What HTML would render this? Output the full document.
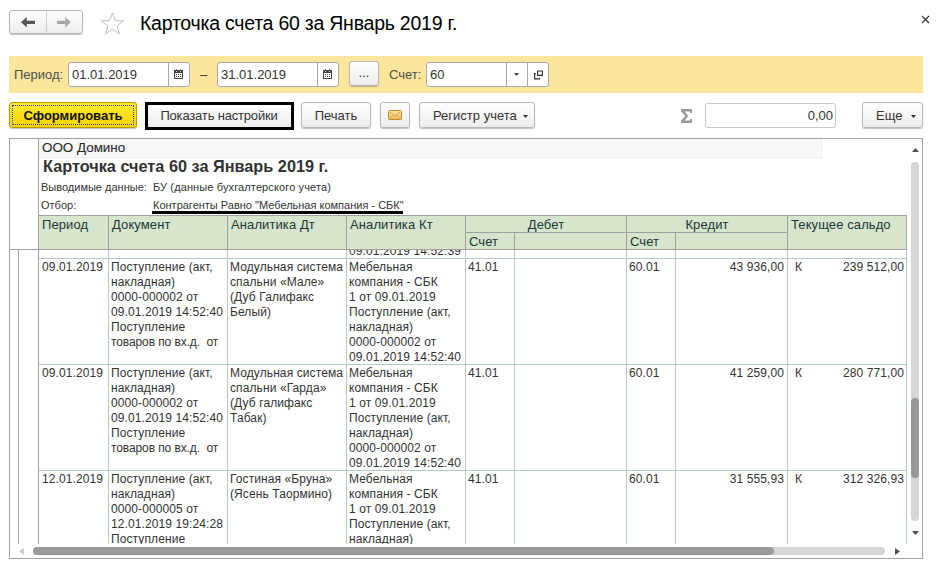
<!DOCTYPE html>
<html><head><meta charset="utf-8">
<style>
*{box-sizing:border-box;margin:0;padding:0}
html,body{width:940px;height:563px;overflow:hidden;background:#fff;font-family:"Liberation Sans",sans-serif;color:#333}
.a{position:absolute}
.t{position:absolute;white-space:nowrap}
.btn{position:absolute;border:1px solid #b9b9b9;border-radius:3px;background:linear-gradient(#ffffff,#ededed);box-shadow:0 1px 1px rgba(0,0,0,.25);font-size:13px;color:#333;text-align:center}
.inp{position:absolute;border:1px solid #a9a9a9;border-radius:3px;background:#fff;font-size:13px;color:#333}
.vl{position:absolute;width:1px;background:#b1cdc5}
.hl{position:absolute;height:1px;background:#b1cdc5}
.gv{position:absolute;width:1px;background:#a0a0a0}
.gh{position:absolute;height:1px;background:#a0a0a0}
.d{position:absolute;font-size:12px;line-height:15px;color:#333;white-space:nowrap;letter-spacing:0.1px}
.h{position:absolute;font-size:13px;line-height:15px;color:#1a3838;white-space:nowrap;letter-spacing:0.1px}
</style></head><body>

<!-- nav buttons -->
<div class="btn" style="left:9px;top:10px;width:74px;height:24px"></div>
<div class="a" style="left:46px;top:11px;width:1px;height:22px;background:#d0d0d0"></div>
<svg class="a" style="left:20px;top:17px" width="16" height="12" viewBox="0 0 16 12"><path d="M1 5.3 L6.8 0 V3.8 H15 V6.9 H6.8 V10.6 Z" fill="#555"/></svg>
<svg class="a" style="left:56px;top:17px" width="16" height="12" viewBox="0 0 16 12"><path d="M15 5.3 L9.2 0 V3.8 H1 V6.9 H9.2 V10.6 Z" fill="#a8a8a8"/></svg>
<!-- star -->
<svg class="a" style="left:100px;top:12px" width="25" height="23" viewBox="0 0 25 23"><path d="M12.5 1 L15.4 8.6 L23.5 8.9 L17.1 13.9 L19.4 21.8 L12.5 17.3 L5.6 21.8 L7.9 13.9 L1.5 8.9 L9.6 8.6 Z" fill="none" stroke="#b8c0c8" stroke-width="1"/></svg>
<div class="t" style="left:140px;top:11px;font-size:19.5px;line-height:24px;color:#000;letter-spacing:-0.24px">Карточка счета 60 за Январь 2019 г.</div>
<svg class="a" style="left:921px;top:15px" width="9" height="9" viewBox="0 0 9 9"><path d="M1 1 L8 8 M8 1 L1 8" stroke="#3a3a3a" stroke-width="1.3"/></svg>

<!-- yellow bar -->
<div class="a" style="left:9px;top:56px;width:914px;height:37px;background:#fbe79b"></div>
<div class="t" style="left:14px;top:67px;font-size:13px;line-height:15px;color:#4d4d4d">Период:</div>
<div class="inp" style="left:68px;top:62px;width:122px;height:25px"></div>
<div class="t" style="left:72px;top:67px;font-size:13px;line-height:15px;color:#333">01.01.2019</div>
<div class="a" style="left:168px;top:63px;width:1px;height:23px;background:#a9a9a9"></div><svg class="a" style="left:174px;top:69px" width="9" height="10" viewBox="0 0 9 10" shape-rendering="crispEdges"><rect x="0" y="1" width="9" height="9" fill="#444"/><rect x="1" y="4" width="7" height="5" fill="#fff"/><rect x="2" y="5" width="1" height="1" fill="#444"/><rect x="4" y="5" width="1" height="1" fill="#444"/><rect x="6" y="5" width="1" height="1" fill="#444"/><rect x="2" y="7" width="1" height="1" fill="#444"/><rect x="4" y="7" width="1" height="1" fill="#444"/><rect x="6" y="7" width="1" height="1" fill="#444"/><rect x="2" y="0" width="1" height="1" fill="#666"/><rect x="6" y="0" width="1" height="1" fill="#666"/><rect x="2" y="2" width="1" height="1" fill="#ddd"/><rect x="6" y="2" width="1" height="1" fill="#ddd"/></svg>
<div class="t" style="left:200px;top:67px;font-size:13px;line-height:15px;color:#333">–</div>
<div class="inp" style="left:217px;top:62px;width:122px;height:25px"></div>
<div class="t" style="left:221px;top:67px;font-size:13px;line-height:15px;color:#333">31.01.2019</div>
<div class="a" style="left:317px;top:63px;width:1px;height:23px;background:#a9a9a9"></div><svg class="a" style="left:323px;top:69px" width="9" height="10" viewBox="0 0 9 10" shape-rendering="crispEdges"><rect x="0" y="1" width="9" height="9" fill="#444"/><rect x="1" y="4" width="7" height="5" fill="#fff"/><rect x="2" y="5" width="1" height="1" fill="#444"/><rect x="4" y="5" width="1" height="1" fill="#444"/><rect x="6" y="5" width="1" height="1" fill="#444"/><rect x="2" y="7" width="1" height="1" fill="#444"/><rect x="4" y="7" width="1" height="1" fill="#444"/><rect x="6" y="7" width="1" height="1" fill="#444"/><rect x="2" y="0" width="1" height="1" fill="#666"/><rect x="6" y="0" width="1" height="1" fill="#666"/><rect x="2" y="2" width="1" height="1" fill="#ddd"/><rect x="6" y="2" width="1" height="1" fill="#ddd"/></svg>
<div class="btn" style="left:349px;top:61px;width:30px;height:25px;line-height:22px">...</div>
<div class="t" style="left:389px;top:67px;font-size:13px;line-height:15px;color:#4d4d4d">Счет:</div>
<div class="inp" style="left:426px;top:62px;width:123px;height:25px"></div>
<div class="t" style="left:430px;top:67px;font-size:13px;line-height:15px;color:#333">60</div>
<div class="a" style="left:506px;top:63px;width:1px;height:23px;background:#a9a9a9"></div>
<div class="a" style="left:527px;top:63px;width:1px;height:23px;background:#a9a9a9"></div><svg class="a" style="left:514px;top:73px" width="5" height="3" viewBox="0 0 5 3"><path d="M0 0 H5 L2.5 3Z" fill="#444"/></svg><svg class="a" style="left:533px;top:69px" width="12" height="12" viewBox="0 0 12 12"><path d="M4.6 2 H9.4 V6.4 H4.6 Z M2.8 4.6 H1.6 V9.9 H6.4 V8.8" fill="none" stroke="#333" stroke-width="1.2"/></svg>

<!-- toolbar -->
<div class="btn" style="left:9px;top:102px;width:128px;height:26px;border-color:#b89a00;background:linear-gradient(#ffe930,#f7d600);font-weight:bold;color:#111;line-height:25px">Сформировать</div><div class="a" style="left:12px;top:105px;width:122px;height:20px;border:1px dotted #2a3ad8"></div>
<div class="btn" style="left:145px;top:102px;width:149px;height:28px;border:3px solid #000;border-radius:0;line-height:21px;letter-spacing:-0.18px;box-shadow:none;text-indent:-1px">Показать настройки</div>
<div class="btn" style="left:301px;top:102px;width:70px;height:26px;line-height:25px">Печать</div>
<div class="btn" style="left:380px;top:102px;width:30px;height:26px"></div><svg class="a" style="left:388px;top:110px" width="14" height="10" viewBox="0 0 14 10"><defs><linearGradient id="eg" x1="0" y1="0" x2="0" y2="1"><stop offset="0" stop-color="#fde9a8"/><stop offset="1" stop-color="#efbd55"/></linearGradient></defs><rect x="0.5" y="0.5" width="13" height="9" rx="1" fill="url(#eg)" stroke="#c8862a"/><path d="M2 2 L7 6 L12 2 M2 8.5 L5 5.5 M12 8.5 L9 5.5" fill="none" stroke="#d09a40" stroke-width="0.9"/></svg>
<div class="btn" style="left:419px;top:102px;width:116px;height:26px;line-height:25px;text-align:left;padding-left:13px">Регистр учета</div><svg class="a" style="left:523px;top:115px" width="5" height="3" viewBox="0 0 5 3"><path d="M0 0 H5 L2.5 3Z" fill="#333"/></svg>
<svg class="a" style="left:681px;top:109px" width="11" height="14" viewBox="0 0 11 14"><path d="M0 0 H11 V4 H9.3 L8.8 2.6 H3.8 L7.2 7 L3.8 11.4 H8.8 L9.3 10 H11 V14 H0 V11.8 L4.2 7 L0 2.2 Z" fill="#9a9a9a"/></svg>
<div class="inp" style="left:705px;top:103px;width:131px;height:25px;border-color:#c8c8c8"></div>
<div class="t" style="left:800px;top:108px;width:33px;text-align:right;font-size:13px;line-height:15px;color:#333">0,00</div>
<div class="btn" style="left:862px;top:102px;width:61px;height:26px;line-height:25px;text-align:left;padding-left:13px">Еще</div><svg class="a" style="left:911px;top:115px" width="5" height="3" viewBox="0 0 5 3"><path d="M0 0 H5 L2.5 3Z" fill="#333"/></svg>

<!-- report frame -->
<div class="a" style="left:9px;top:138px;width:914px;height:421px;border:1px solid #a0a0a0"></div>
<div class="gv" style="left:38px;top:139px;height:405px"></div>
<div class="gh" style="left:10px;top:249px;width:28px"></div>
<div class="gv" style="left:18px;top:250px;height:294px"></div>
<div class="a" style="left:39px;top:139px;width:781px;height:17px;background:#f7f7f7"></div><div class="a" style="left:39px;top:157px;width:783px;height:1px;background:#ececec"></div><div class="a" style="left:821px;top:139px;width:1px;height:19px;background:#ececec"></div>
<div class="t" style="left:42px;top:140px;font-size:13.4px;line-height:15px;color:#2a2a2a;-webkit-text-stroke:0.12px #2a2a2a">ООО Домино</div>
<div class="t" style="left:43px;top:157px;font-size:16.3px;line-height:19px;font-weight:bold;color:#333">Карточка счета 60 за Январь 2019 г.</div>
<div class="t" style="left:41px;top:181px;font-size:11px;line-height:13px;color:#333">Выводимые данные:</div>
<div class="t" style="left:153px;top:181px;font-size:11px;line-height:13px;color:#333;letter-spacing:0.12px">БУ (данные бухгалтерского учета)</div>
<div class="t" style="left:41px;top:199px;font-size:11px;line-height:13px;color:#333">Отбор:</div>
<div class="t" style="left:153px;top:199px;font-size:11px;line-height:13px;color:#333">Контрагенты Равно "Мебельная компания - СБК"</div>
<div class="a" style="left:152px;top:211px;width:251px;height:3px;background:#000"></div>
<div class="a" style="left:38px;top:215px;width:869px;height:35px;background:#d7e5cc"></div>
<div class="gh" style="left:38px;top:215px;width:869px"></div>
<div class="gh" style="left:465px;top:232px;width:322px"></div>
<div class="gh" style="left:38px;top:249px;width:869px"></div>
<div class="gv" style="left:38px;top:215px;height:35px"></div>
<div class="gv" style="left:108px;top:215px;height:35px"></div>
<div class="gv" style="left:227px;top:215px;height:35px"></div>
<div class="gv" style="left:346px;top:215px;height:35px"></div>
<div class="gv" style="left:465px;top:215px;height:35px"></div>
<div class="gv" style="left:514px;top:232px;height:17px"></div>
<div class="gv" style="left:626px;top:215px;height:35px"></div>
<div class="gv" style="left:675px;top:232px;height:17px"></div>
<div class="gv" style="left:787px;top:215px;height:35px"></div>
<div class="gv" style="left:906px;top:215px;height:35px"></div>
<div class="h" style="left:42px;top:217px">Период</div>
<div class="h" style="left:112px;top:217px">Документ</div>
<div class="h" style="left:231px;top:217px">Аналитика Дт</div>
<div class="h" style="left:350px;top:217px">Аналитика Кт</div>
<div class="h" style="left:791px;top:217px">Текущее сальдо</div>
<div class="h" style="left:465px;top:217px;width:162px;text-align:center">Дебет</div>
<div class="h" style="left:626px;top:217px;width:162px;text-align:center">Кредит</div>
<div class="h" style="left:469px;top:234px">Счет</div>
<div class="h" style="left:630px;top:234px">Счет</div>
<div class="a" style="left:0;top:250px;width:940px;height:294px;overflow:hidden">
<div class="vl" style="left:108px;top:0;height:294px"></div>
<div class="vl" style="left:227px;top:0;height:294px"></div>
<div class="vl" style="left:346px;top:0;height:294px"></div>
<div class="vl" style="left:465px;top:0;height:294px"></div>
<div class="vl" style="left:514px;top:0;height:294px"></div>
<div class="vl" style="left:626px;top:0;height:294px"></div>
<div class="vl" style="left:675px;top:0;height:294px"></div>
<div class="vl" style="left:787px;top:0;height:294px"></div>
<div class="vl" style="left:906px;top:0;height:294px"></div>
<div class="d" style="left:349px;top:-96px;"><br><br><br><br><br><br>09.01.2019 14:52:39</div>
<div class="hl" style="left:39px;top:8px;width:868px"></div>
<div class="d" style="left:42px;top:10px;">09.01.2019</div>
<div class="d" style="left:111px;top:10px;">Поступление (акт,<br>накладная)<br>0000-000002 от<br>09.01.2019 14:52:40<br>Поступление<br><span style="letter-spacing:-0.1px">товаров по вх.д.&nbsp; от</span></div>
<div class="d" style="left:230px;top:10px;">Модульная система<br>спальни «Мале»<br>(Дуб Галифакс<br>Белый)</div>
<div class="d" style="left:349px;top:10px;">Мебельная<br>компания - СБК<br>1 от 09.01.2019<br>Поступление (акт,<br>накладная)<br>0000-000002 от<br>09.01.2019 14:52:40</div>
<div class="d" style="left:468px;top:10px;">41.01</div>
<div class="d" style="left:629px;top:10px;">60.01</div>
<div class="d" style="left:676px;top:10px;width:108px;text-align:right">43 936,00</div>
<div class="d" style="left:795px;top:10px;">К</div>
<div class="d" style="left:788px;top:10px;width:116px;text-align:right">239 512,00</div>
<div class="hl" style="left:39px;top:114px;width:868px"></div>
<div class="d" style="left:42px;top:116px;">09.01.2019</div>
<div class="d" style="left:111px;top:116px;">Поступление (акт,<br>накладная)<br>0000-000002 от<br>09.01.2019 14:52:40<br>Поступление<br><span style="letter-spacing:-0.1px">товаров по вх.д.&nbsp; от</span></div>
<div class="d" style="left:230px;top:116px;">Модульная система<br>спальни «Гарда»<br>(Дуб галифакс<br>Табак)</div>
<div class="d" style="left:349px;top:116px;">Мебельная<br>компания - СБК<br>1 от 09.01.2019<br>Поступление (акт,<br>накладная)<br>0000-000002 от<br>09.01.2019 14:52:40</div>
<div class="d" style="left:468px;top:116px;">41.01</div>
<div class="d" style="left:629px;top:116px;">60.01</div>
<div class="d" style="left:676px;top:116px;width:108px;text-align:right">41 259,00</div>
<div class="d" style="left:795px;top:116px;">К</div>
<div class="d" style="left:788px;top:116px;width:116px;text-align:right">280 771,00</div>
<div class="hl" style="left:39px;top:220px;width:868px"></div>
<div class="d" style="left:42px;top:222px;">12.01.2019</div>
<div class="d" style="left:111px;top:222px;">Поступление (акт,<br>накладная)<br>0000-000005 от<br>12.01.2019 19:24:28<br>Поступление</div>
<div class="d" style="left:230px;top:222px;">Гостиная «Бруна»<br>(Ясень Таормино)</div>
<div class="d" style="left:349px;top:222px;">Мебельная<br>компания - СБК<br>1 от 09.01.2019<br>Поступление (акт,<br>накладная)</div>
<div class="d" style="left:468px;top:222px;">41.01</div>
<div class="d" style="left:629px;top:222px;">60.01</div>
<div class="d" style="left:676px;top:222px;width:108px;text-align:right">31 555,93</div>
<div class="d" style="left:795px;top:222px;">К</div>
<div class="d" style="left:788px;top:222px;width:116px;text-align:right">312 326,93</div>
</div>
<div class="a" style="left:911px;top:162px;width:8px;height:359px;border-radius:4px;background:#d6d6d6"></div>
<div class="a" style="left:911px;top:398px;width:8px;height:80px;border-radius:4px;background:#999"></div>
<svg class="a" style="left:912px;top:148px" width="7" height="4" viewBox="0 0 7 4"><path d="M0 4 L3.5 0 L7 4Z" fill="#505050"/></svg>
<svg class="a" style="left:912px;top:531px" width="7" height="4" viewBox="0 0 7 4"><path d="M0 0 L3.5 4 L7 0Z" fill="#505050"/></svg>
<div class="a" style="left:33px;top:547px;width:852px;height:8px;border-radius:4px;background:#d6d6d6"></div>
<div class="a" style="left:33px;top:547px;width:741px;height:8px;border-radius:4px;background:#999"></div>
<svg class="a" style="left:19px;top:548px" width="5" height="7" viewBox="0 0 5 7"><path d="M5 0 L0 3.5 L5 7Z" fill="#c8c8c8"/></svg>
<svg class="a" style="left:895px;top:548px" width="5" height="7" viewBox="0 0 5 7"><path d="M0 0 L5 3.5 L0 7Z" fill="#505050"/></svg>
</body></html>
